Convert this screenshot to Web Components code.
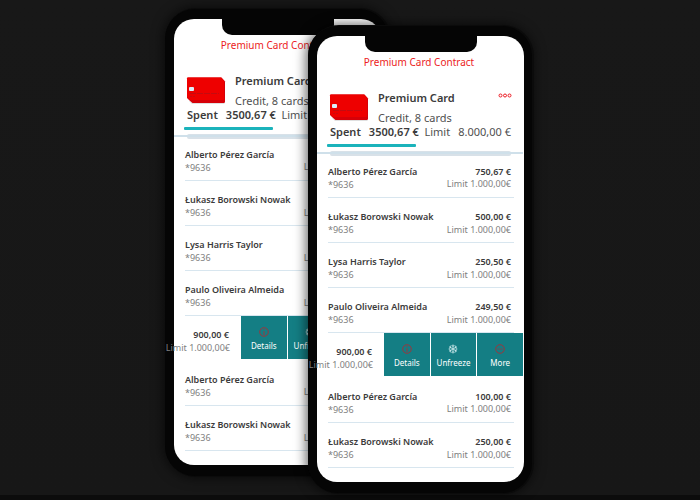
<!DOCTYPE html>
<html lang="en">
<head>
<meta charset="utf-8">
<title>Premium Card Contract</title>
<style>
html, body { margin: 0; min-height: 100vh; }
body { background: linear-gradient(#181818, #171717 99%, #0c0c0c 99%); color: #3b3b3b; font-family: "Noto Sans", "Open Sans", sans-serif; font-size: 9px; overflow: hidden; }
</style>
</head>
<body>
<phone-stage>
  <phone-frame><card-contract></card-contract></phone-frame>
  <phone-frame class="front"><card-contract></card-contract></phone-frame>
</phone-stage>

<script>
const define = (name, html, setup) => {
  const template = document.createElement('template');
  template.innerHTML = html;
  customElements.define(name, class extends HTMLElement {
    connectedCallback() {
      if (this.shadowRoot) return;
      this.attachShadow({ mode: 'open' }).append(template.content.cloneNode(true));
      if (setup) setup(this, this.shadowRoot);
    }
  });
};

define('phone-stage', `
<style>
:host { display: flex; justify-content: center; align-items: flex-start; padding: 9px 3px 0 0; }
::slotted(phone-frame) { flex: 0 0 auto; z-index: 1; }
::slotted(.front) { margin: 17px 0 0 -81px; z-index: 2; }
</style><slot></slot>`);

define('phone-frame', `
<style>
:host { display: block; box-sizing: border-box; width: 224px; padding: 10px 8px 11px 9px; border-radius: 30px; background: #050505;
  box-shadow: 1px 0 0 1px #0b0b0b, 0 0 12px 2px rgba(0,0,0,.6); }
.screen { background: #fff; border-radius: 20px; }
.notch { display: block; width: 112px; height: 16px; margin: 0 auto; background: #050505; border-radius: 0 0 10px 10px; }
</style>
<div class="screen"><span class="notch"></span><slot></slot></div>`);

define('card-picture', `
<style>:host { display: block; } svg { display: block; }</style>
<svg width="40" height="28" viewBox="0 0 40 28" aria-hidden="true">
<path d="M3 24 6 27H38L39 26V6" fill="#000" opacity=".12"/>
<path d="M2 0.5H35.500L39 4.500V24.500Q39 26 37.500 26H6.500L3 23 1 21V1.500Q1 .5 2 .5Z" fill="#d60008"/>
<path d="M2 0.500H35L38 3.500V21.500Q38 23 36.500 23H4L1 20V1.500Q1 .5 2 .5Z" fill="#ee0000"/>
<rect x="3" y="10" width="5" height="4" rx="1" fill="#dceefa"/>
<path d="M4 16.500H33" stroke="#c40b10" stroke-dasharray="6 1"/>
<path d="M4 19.500H10" stroke="#c90b10" stroke-dasharray="2 1"/>
</svg>`);

define('card-summary', `
<style>
:host { display: block; padding: 0 13px; }
.top { display: grid; grid-template-columns: 40px 1fr auto; column-gap: 8px; }
card-picture { margin: 6px 0 0 -1px; }
h2 { margin: 0; font-size: 11px; line-height: 20px; font-weight: 600; }
p { margin: 0; font-size: 11px; line-height: 20px; color: #505050; }
button { align-self: start; display: block; margin: 5px -1px 0 0; padding: 0; border: 0; background: none; }
button svg { display: block; }
.totals { display: flex; justify-content: space-between; font-size: 11px; line-height: 16px; margin-top: -4px; white-space: nowrap; color: #505050; }
.totals div { display: flex; gap: 8px; }
b { font-weight: 600; color: #3b3b3b; }
.bar { width: 89px; height: 3px; margin: 4px 0 4px -3px; background: #1bb3bb; border-radius: 1px; }
.track { height: 5px; background: #d8e1e8; border-radius: 2px; }
hr { border: 0; height: 2px; margin: -4px -12px 0 -13px; background: #cfe0ea; }
</style>
<div class="top">
  <card-picture></card-picture>
  <div><h2>Premium Card</h2><p>Credit, 8 cards</p></div>
  <button aria-label="Card options"><svg width="14" height="5" viewBox="0 0 14 5" fill="none" stroke="#ec1c24"><circle cx="2.500" cy="2.500" r="1.500"/><circle cx="7" cy="2.500" r="1.500"/><circle cx="11.500" cy="2.500" r="1.500"/></svg></button>
</div>
<div class="totals"><div><b>Spent</b><b>3500,67 €</b></div><div><span>Limit</span><span>8.000,00 €</span></div></div>
<div class="bar"></div><div class="track"></div><hr>`);

define('card-row', `
<style>
:host { display: flex; justify-content: space-between; box-sizing: border-box; min-height: 45px; margin: 0 10px 0 11px; padding: 12px 3px 5px 0; border-bottom: 1px solid #d8e6ef; line-height: 13px; white-space: nowrap; }
b, small { display: block; font-size: 9px; }
b { font-weight: 600; }
small { color: #808080; }
.money { text-align: right; }
:host([tight]) .money small { margin-top: -1px; }
</style>
<div><b class="name"></b><small>*9636</small></div>
<div class="money"><b class="amount"></b><small>Limit 1.000,00€</small></div>`, (host, root) => {
  root.querySelector('.name').textContent = host.getAttribute('name');
  root.querySelector('.amount').textContent = host.getAttribute('amount');
});

define('swiped-row', `
<style>
:host { display: flex; justify-content: flex-end; margin-right: 1px; min-height: 45px; line-height: 13px; white-space: nowrap; }
.money { padding: 12px 11px 0 0; text-align: right; }
b, small { display: block; font-size: 9px; }
b { font-weight: 600; padding-right: 1px; }
small { color: #808080; }
.actions { display: grid; grid-template-columns: repeat(3, 1fr); gap: 1px; flex: 0 0 139px; height: 43px; }
</style>
<div class="money"><b>900,00 €</b><small>Limit 1.000,00€</small></div>
<div class="actions">
<row-action label="Details"><svg width="10" height="10" viewBox="0 0 10 10" fill="none" stroke="#98383f"><circle cx="5" cy="5" r="4.300"/><path d="M5 2V3M5 4V8"/></svg></row-action>
<row-action label="Unfreeze"><svg width="10" height="10" viewBox="0 0 10 10" fill="none" stroke="#d5eef0" stroke-width=".8"><path d="M5 .5V9.500M1 2.700 9 7.300M9 2.700 1 7.300M3.500 1 5 2.500 6.500 1M3.500 9 5 7.500 6.500 9M.8 4.500 2.800 3.700 2.500 1.700M9.200 4.500 7.200 3.700 7.500 1.700M.8 5.500 2.800 6.300 2.500 8.300M9.200 5.500 7.200 6.300 7.500 8.300"/></svg></row-action>
<row-action label="More"><svg width="10" height="10" viewBox="0 0 10 10" fill="none" stroke="#98383f"><circle cx="5" cy="5" r="4.300"/><path d="M2.500 5H7.500" stroke-dasharray="1.200 .7"/></svg></row-action>
</div>`);

define('row-action', `
<style>
:host { display: block; }
button { display: flex; flex-direction: column; align-items: center; width: 100%; height: 100%; padding: 11px 0 0; gap: 3px; border: 0; background: #147e84; color: #fff; font: 8px/12px "Noto Sans", sans-serif; }
::slotted(svg) { display: block; }
</style>
<button><slot></slot><span></span></button>`, (host, root) => {
  root.querySelector('span').textContent = host.getAttribute('label');
});

define('card-contract', `
<style>
:host { display: block; padding-bottom: 14px; }
card-summary { margin-bottom: -1px; }
h1 { margin: 0 0 16px; padding-right: 3px; color: #ec1c24; font-size: 10px; line-height: 20px; font-weight: 400; text-align: center; white-space: nowrap; }
</style>
<h1>Premium Card Contract</h1>
<card-summary></card-summary>
<card-row tight name="Alberto Pérez García" amount="750,67 €"></card-row>
<card-row name="Łukasz Borowski Nowak" amount="500,00 €"></card-row>
<card-row name="Lysa Harris Taylor" amount="250,50 €"></card-row>
<card-row name="Paulo Oliveira Almeida" amount="249,50 €"></card-row>
<swiped-row></swiped-row>
<card-row tight name="Alberto Pérez García" amount="100,00 €"></card-row>
<card-row name="Łukasz Borowski Nowak" amount="250,00 €"></card-row>`);
</script>
</body>
</html>
